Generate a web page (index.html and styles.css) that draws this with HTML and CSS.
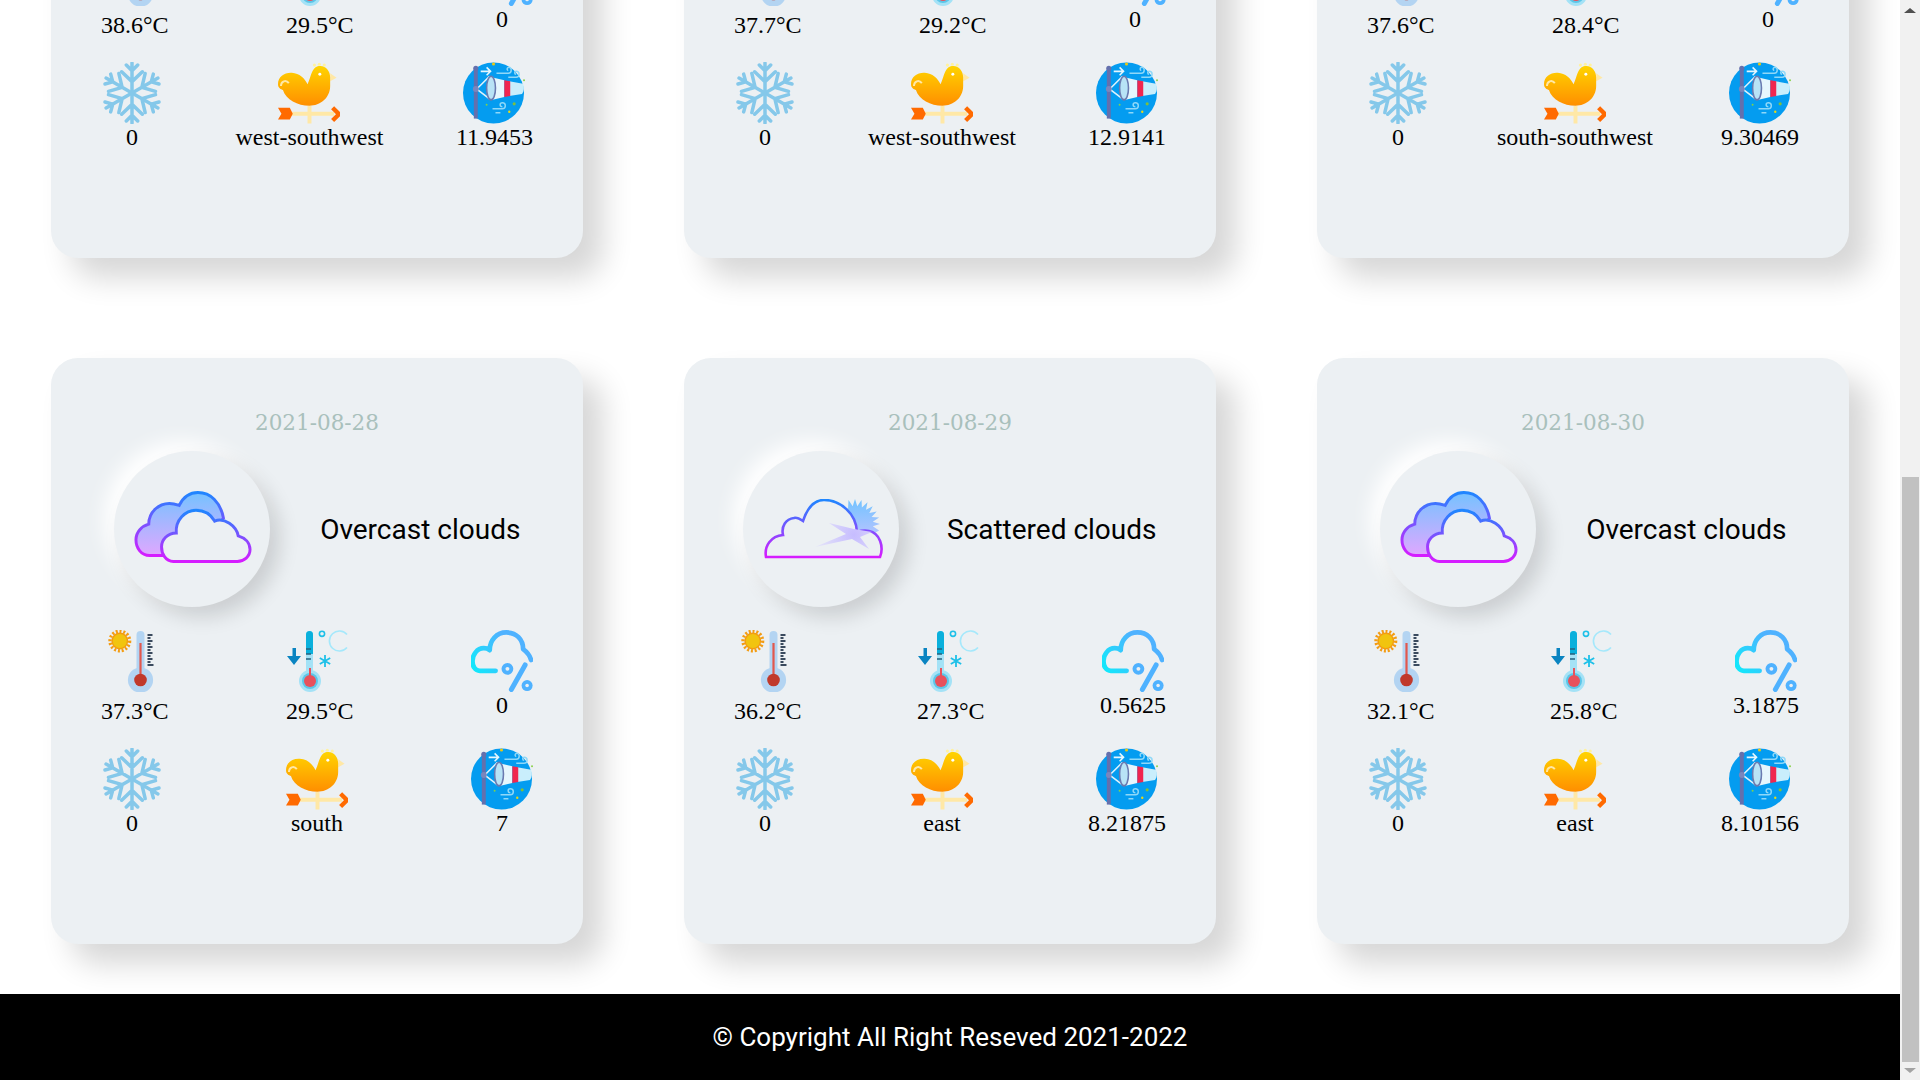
FILE: index.html
```html
<!DOCTYPE html>
<html lang="en">
<head>
    <meta charset="UTF-8">
    <meta name="viewport" content="width=device-width, initial-scale=1.0">
    <title>Weather forecast</title>
    <link rel="stylesheet" href="styles.css">
</head>
<body>
    <!-- icon sprite -->
    <svg class="sprite" xmlns="http://www.w3.org/2000/svg">
        <defs>
            <linearGradient id="lineGrad" x1="0" y1="0" x2="0" y2="1">
                <stop offset="0" stop-color="#1f86ff"/>
                <stop offset="1" stop-color="#d61cff"/>
            </linearGradient>
            <linearGradient id="fillGrad" gradientUnits="userSpaceOnUse" x1="0" y1="0" x2="0" y2="70">
                <stop offset="0" stop-color="#72c3ff"/>
                <stop offset="1" stop-color="#e6a6ff"/>
            </linearGradient>
            <linearGradient id="sunGrad" gradientUnits="userSpaceOnUse" x1="90" y1="0" x2="90" y2="36">
                <stop offset="0" stop-color="#72c3ff"/>
                <stop offset="1" stop-color="#b4c4ff"/>
            </linearGradient>
            <radialGradient id="flareGrad" gradientUnits="userSpaceOnUse" cx="90" cy="36" r="40">
                <stop offset="0" stop-color="#c6bcff"/>
                <stop offset="1" stop-color="#e6e6f8"/>
            </radialGradient>
            <linearGradient id="rainGrad" gradientUnits="userSpaceOnUse" x1="0" y1="36" x2="36" y2="12">
                <stop offset="0" stop-color="#12e8fb"/>
                <stop offset="1" stop-color="#4fb2ff"/>
            </linearGradient>
            <linearGradient id="birdGrad" x1="0" y1="0" x2="0" y2="1">
                <stop offset="0" stop-color="#ffd400"/>
                <stop offset="1" stop-color="#ff8e00"/>
            </linearGradient>
        </defs>

        <symbol id="i-overcast" viewBox="0 0 120 74">
            <path d="M32 66H16C7 66 2 58 2 50C2 42 8 36 15 34C15 22 25 13 36 13C40 13 43 14 46 15C50 7 57 2 65 2C78 2 88 12 91 28L60 66Z" fill="url(#fillGrad)" stroke="url(#lineGrad)" stroke-width="3"/>
            <path d="M40 72C32 72 28 64 28 57C28 50 34 43 43 43C42 30 52 20 63 20C72 20 78 24 82 31C92 27 104 36 106 46C113 48 118 53 118 60C118 67 112 72 105 72Z" fill="#ecf0f3" stroke="url(#lineGrad)" stroke-width="3"/>
        </symbol>

        <symbol id="i-scattered" viewBox="0 0 120 60">
            <polygon fill="url(#sunGrad)" points="84.5,0.9 88.7,7.2 91,0 93.3,7.2 97.5,0.9 97.9,8.4 103.5,3.3 102,10.7 108.7,7.3 105.3,14 112.7,12.5 107.6,18.1 115.1,18.5 108.8,22.7 116,25 108.8,27.3 115.1,31.5 100,40 84,40 84.1,8.4"/>
            <path d="M2 58H116C120 48 116 34 105 32C100 31 96 32 93 33C92 14 76 1 60 1C49 1 43 10 39 22C36 20 33 18 30 19C22 20 17 27 19 36C7 37 0 47 2 58Z" fill="#ecf0f3" stroke="url(#lineGrad)" stroke-width="2.6"/>
            <polygon fill="url(#flareGrad)" points="65,24 90,30 108,33 96,38 105,50 88,40 51,48 82,35"/>
        </symbol>

        <symbol id="i-hot" viewBox="-6.5 0 66 62">
            <circle cx="11.3" cy="11" r="9.8" fill="none" stroke="#f39c12" stroke-width="3.4" stroke-dasharray="2 1.8"/>
            <circle cx="11.3" cy="11" r="8.4" fill="#f39c12"/>
            <circle cx="11.3" cy="11" r="7" fill="#f1c40f"/>
            <rect x="28" y="1" width="8" height="42" rx="4" fill="#b3d4f2"/>
            <circle cx="32" cy="50" r="12.6" fill="#b3d4f2"/>
            <rect x="30.9" y="13" width="2.2" height="32" fill="#e2574c"/>
            <circle cx="32" cy="50" r="6.3" fill="#c0392b"/>
            <path d="M39 5H44M39 8H42M39 11H44M39 14H42M39 17H44M39 20H42M39 23H44M39 26H42M39 29H44M39 32H42M39 35H45" stroke="#3a4a5e" stroke-width="2"/>
        </symbol>

        <symbol id="i-cold" viewBox="0 0 66 62">
            <rect x="19" y="1" width="7" height="42" rx="3.5" fill="#a4e2f6"/>
            <path d="M19 24V4.5a3.5 3.5 0 0 1 7 0V24Z" fill="#0ab0dc"/>
            <circle cx="23" cy="51" r="11" fill="#a4e2f6"/>
            <circle cx="23" cy="51" r="8" fill="#5cc6e8"/>
            <rect x="22" y="38" width="2" height="10" fill="#e8515c"/>
            <circle cx="23" cy="51" r="6" fill="#e8515c"/>
            <path d="M19 19H24M19 24H24M19 29H24" stroke="#27627e" stroke-width="1.4"/>
            <path d="M5.5 18H9V26H14L7 35L0 26H5.5Z" fill="#0a84c1"/>
            <circle cx="35" cy="3.8" r="2.6" fill="none" stroke="#1ec0e8" stroke-width="1.6"/>
            <path d="M60 4.5A10 10 0 1 0 60 17.5" fill="none" stroke="#a5e8fb" stroke-width="1.6"/>
            <path d="M38 25V37M32.8 28L43.2 34M43.2 28L32.8 34" stroke="#1ec0e8" stroke-width="1.8"/>
        </symbol>

        <symbol id="i-rain" viewBox="0 0 63 62">
            <path d="M25 41H9C4 41 1.5 36 1.500 31C1.500 25 6 18 13 18C15 18 17 18.500 19 20C19 10 26 2 36 2C46 2 53 9 53 19C57 22 60 26 61 30" fill="none" stroke="url(#rainGrad)" stroke-width="4.800" stroke-linecap="round" stroke-linejoin="round"/>
            <circle cx="37" cy="39" r="4" fill="none" stroke="#4fb2ff" stroke-width="4"/>
            <path d="M55 35L41 60" stroke="#4fb2ff" stroke-width="5" stroke-linecap="round"/>
            <circle cx="57" cy="56" r="5.600" fill="#4fb2ff"/>
            <circle cx="57" cy="56" r="1.800" fill="#ecf0f3"/>
        </symbol>

        <symbol id="i-snow" viewBox="1 1 60 60">
            <g id="snowArm" fill="none" stroke="#85c8ea" stroke-width="3.400" stroke-linecap="round" stroke-linejoin="round">
                <path d="M31 31V2M25.500 4L31 9.500L36.500 4M21 10.500L31 20L41 10.500"/>
            </g>
            <use href="#snowArm" transform="rotate(60 31 31)"/>
            <use href="#snowArm" transform="rotate(120 31 31)"/>
            <use href="#snowArm" transform="rotate(180 31 31)"/>
            <use href="#snowArm" transform="rotate(240 31 31)"/>
            <use href="#snowArm" transform="rotate(300 31 31)"/>
        </symbol>

        <symbol id="i-vane" viewBox="0 0 63 62">
            <path d="M32 44V62M13 52H57" stroke="#ffe8a6" stroke-width="4"/>
            <circle cx="37" cy="2.600" r="1.600" fill="#fff2a0"/>
            <circle cx="42" cy="1.800" r="1.600" fill="#fff2a0"/>
            <circle cx="47" cy="2.600" r="1.600" fill="#fff2a0"/>
            <path d="M53 11L59.500 15.500L53 19Z" fill="#ffe8a6"/>
            <path d="M0 22C0 14 7 10 14 10.500C22 11 27 16 30 22C32 18 33 13 35 9C37 5 39 3.500 43 3.500C49 3.500 53 9 53 15V24C53 36 43 44 32 44C20 44 8 38 5 28C3 27 0 26 0 22Z" fill="url(#birdGrad)"/>
            <path d="M3 24C3 19 8 17 11 21" fill="none" stroke="#ffe8a6" stroke-width="2"/>
            <circle cx="42.500" cy="12" r="1.500" fill="#fff"/>
            <path d="M0 46H12L15 52L12 58H0L3.500 52Z" fill="#ff6a00"/>
            <path d="M55.500 46L62 52.500L55.500 59" fill="none" stroke="#ff6a00" stroke-width="4.400"/>
        </symbol>

        <symbol id="i-sock" viewBox="0 0 63 62">
            <circle cx="31" cy="31" r="31" fill="#049cf0"/>
            <path d="M47 19L61 21.500C62.500 25 62 29 60 32L47 34Z" fill="#c9eefc"/>
            <path d="M29 15L42 18V35L29 38Z" fill="#e6f6fd"/>
            <path d="M42 18L48 19V34L42 35Z" fill="#f0264f"/>
            <path d="M14 27L27 14M14 27L27 37" stroke="#dff1fb" stroke-width="1.600" fill="none"/>
            <ellipse cx="28.500" cy="26" rx="4.500" ry="12" fill="#b8e3f6" stroke="#6a7ab0" stroke-width="1.600"/>
            <rect x="11" y="6" width="4" height="51" fill="#6470ad"/>
            <circle cx="13" cy="6" r="2.600" fill="#6470ad"/>
            <circle cx="13" cy="27" r="3" fill="#7a86bd"/>
            <path d="M18 9H28M24 5L28 9L24 13" fill="none" stroke="#e6f6fd" stroke-width="1.600"/>
            <path d="M34 11H46C50 11 50 4 46 5C44 6 45 8 46 8M46 15H54C58 15 58 9 54 9C52 9 52 12 54 12" fill="none" stroke="#8fd8f8" stroke-width="1.500"/>
            <path d="M30 47H40C44 47 44 41 40 41C37 41 37 45 40 45M33 51H38" fill="none" stroke="#8fd8f8" stroke-width="1.500"/>
            <circle cx="31" cy="1.500" r="1.600" fill="#e8c715"/>
            <circle cx="62" cy="18" r="1" fill="#8ad14a"/>
            <circle cx="52" cy="42" r="1.600" fill="#7fbf3c"/>
            <circle cx="47" cy="50" r="1.200" fill="#e8d915"/>
            <circle cx="24" cy="43" r="1" fill="#7fd14a"/>
        </symbol>
    </svg>

    <div class="window">
        <div class="viewport">
            <main class="cards">

                <section class="card card-cut">
                    <div class="stats stats-top">
                        <div class="stat"><svg class="icon tall"><use href="#i-hot"/></svg><span>38.6°C</span></div>
                        <div class="stat"><svg class="icon tall"><use href="#i-cold"/></svg><span>29.5°C</span></div>
                        <div class="stat"><svg class="icon"><use href="#i-rain"/></svg><span>0</span></div>
                    </div>
                    <div class="stats">
                        <div class="stat"><svg class="icon"><use href="#i-snow"/></svg><span>0</span></div>
                        <div class="stat"><svg class="icon"><use href="#i-vane"/></svg><span>west-southwest</span></div>
                        <div class="stat"><svg class="icon"><use href="#i-sock"/></svg><span>11.9453</span></div>
                    </div>
                </section>

                <section class="card card-cut">
                    <div class="stats stats-top">
                        <div class="stat"><svg class="icon tall"><use href="#i-hot"/></svg><span>37.7°C</span></div>
                        <div class="stat"><svg class="icon tall"><use href="#i-cold"/></svg><span>29.2°C</span></div>
                        <div class="stat"><svg class="icon"><use href="#i-rain"/></svg><span>0</span></div>
                    </div>
                    <div class="stats">
                        <div class="stat"><svg class="icon"><use href="#i-snow"/></svg><span>0</span></div>
                        <div class="stat"><svg class="icon"><use href="#i-vane"/></svg><span>west-southwest</span></div>
                        <div class="stat"><svg class="icon"><use href="#i-sock"/></svg><span>12.9141</span></div>
                    </div>
                </section>

                <section class="card card-cut">
                    <div class="stats stats-top">
                        <div class="stat"><svg class="icon tall"><use href="#i-hot"/></svg><span>37.6°C</span></div>
                        <div class="stat"><svg class="icon tall"><use href="#i-cold"/></svg><span>28.4°C</span></div>
                        <div class="stat"><svg class="icon"><use href="#i-rain"/></svg><span>0</span></div>
                    </div>
                    <div class="stats">
                        <div class="stat"><svg class="icon"><use href="#i-snow"/></svg><span>0</span></div>
                        <div class="stat"><svg class="icon"><use href="#i-vane"/></svg><span>south-southwest</span></div>
                        <div class="stat"><svg class="icon"><use href="#i-sock"/></svg><span>9.30469</span></div>
                    </div>
                </section>

                <section class="card">
                    <p class="date">2021-08-28</p>
                    <div class="summary">
                        <div class="bubble"><svg class="cloud"><use href="#i-overcast"/></svg></div>
                        <p class="desc">Overcast clouds</p>
                    </div>
                    <div class="stats stats-top">
                        <div class="stat"><svg class="icon tall"><use href="#i-hot"/></svg><span>37.3°C</span></div>
                        <div class="stat"><svg class="icon tall"><use href="#i-cold"/></svg><span>29.5°C</span></div>
                        <div class="stat"><svg class="icon"><use href="#i-rain"/></svg><span>0</span></div>
                    </div>
                    <div class="stats">
                        <div class="stat"><svg class="icon"><use href="#i-snow"/></svg><span>0</span></div>
                        <div class="stat"><svg class="icon"><use href="#i-vane"/></svg><span>south</span></div>
                        <div class="stat"><svg class="icon"><use href="#i-sock"/></svg><span>7</span></div>
                    </div>
                </section>

                <section class="card">
                    <p class="date">2021-08-29</p>
                    <div class="summary">
                        <div class="bubble"><svg class="cloud cloud-sun"><use href="#i-scattered"/></svg></div>
                        <p class="desc">Scattered clouds</p>
                    </div>
                    <div class="stats stats-top">
                        <div class="stat"><svg class="icon tall"><use href="#i-hot"/></svg><span>36.2°C</span></div>
                        <div class="stat"><svg class="icon tall"><use href="#i-cold"/></svg><span>27.3°C</span></div>
                        <div class="stat"><svg class="icon"><use href="#i-rain"/></svg><span>0.5625</span></div>
                    </div>
                    <div class="stats">
                        <div class="stat"><svg class="icon"><use href="#i-snow"/></svg><span>0</span></div>
                        <div class="stat"><svg class="icon"><use href="#i-vane"/></svg><span>east</span></div>
                        <div class="stat"><svg class="icon"><use href="#i-sock"/></svg><span>8.21875</span></div>
                    </div>
                </section>

                <section class="card">
                    <p class="date">2021-08-30</p>
                    <div class="summary">
                        <div class="bubble"><svg class="cloud"><use href="#i-overcast"/></svg></div>
                        <p class="desc">Overcast clouds</p>
                    </div>
                    <div class="stats stats-top">
                        <div class="stat"><svg class="icon tall"><use href="#i-hot"/></svg><span>32.1°C</span></div>
                        <div class="stat"><svg class="icon tall"><use href="#i-cold"/></svg><span>25.8°C</span></div>
                        <div class="stat"><svg class="icon"><use href="#i-rain"/></svg><span>3.1875</span></div>
                    </div>
                    <div class="stats">
                        <div class="stat"><svg class="icon"><use href="#i-snow"/></svg><span>0</span></div>
                        <div class="stat"><svg class="icon"><use href="#i-vane"/></svg><span>east</span></div>
                        <div class="stat"><svg class="icon"><use href="#i-sock"/></svg><span>8.10156</span></div>
                    </div>
                </section>

            </main>
            <footer class="footer">© Copyright All Right Reseved 2021-2022</footer>
        </div>

        <div class="scrollbar">
            <div class="arrow-up"></div>
            <div class="track"><div class="thumb"></div></div>
            <div class="arrow-down"></div>
        </div>
    </div>
</body>
</html>
```

FILE: styles.css
```css
html, body {
    height: 100%;
}
body {
    margin: 0;
    background: #fff;
    color: #000;
    font-family: "Liberation Serif", serif;
    overflow: hidden;
}
.sprite {
    position: absolute;
    width: 0;
    height: 0;
}
.window {
    display: flex;
    height: 100vh;
}

/* the page is shown scrolled to its end, so the content hangs from the bottom */
.viewport {
    flex: 1;
    min-width: 0;
    display: flex;
    flex-direction: column;
    justify-content: flex-end;
    overflow: hidden;
}
.cards {
    flex: none;
    display: grid;
    grid-template-columns: repeat(3, 532px);
    justify-content: space-between;
    row-gap: 100px;
    padding: 0 51px 50px;
}
.card {
    height: 586px;
    box-sizing: border-box;
    padding-top: 51px;
    background: #ecf0f3;
    border-radius: 27px;
    box-shadow: 20px 20px 30px rgba(0, 0, 0, 0.16);
}
/* top row: date and summary are above the fold */
.card-cut {
    padding-top: 249px;
}
.date {
    margin: 0 0 14px;
    text-align: center;
    font-family: "DejaVu Serif", serif;
    font-size: 21.5px;
    line-height: 28px;
    color: #a9c0bc;
}
.summary {
    display: flex;
    justify-content: space-evenly;
    align-items: center;
    padding: 0 12px;
}
.bubble {
    flex: none;
    width: 156px;
    height: 156px;
    display: flex;
    justify-content: center;
    align-items: center;
    border-radius: 50%;
    background: #ecf0f3;
    box-shadow: 10px 10px 20px rgba(0, 0, 0, 0.14), -10px -10px 20px #fff;
}
.cloud {
    width: 118px;
    height: 74px;
    margin: -4px 0 0 2px;
}
.cloud-sun {
    width: 120px;
    height: 60px;
    margin: 0 0 0 6px;
}
.desc {
    margin: 0;
    font-family: Roboto, sans-serif;
    font-size: 28px;
    white-space: nowrap;
}
.stats {
    display: flex;
    justify-content: space-between;
    padding: 0 50px;
}
.stats-top {
    margin: 23px 0 23px;
}
.stat {
    display: flex;
    flex-direction: column;
    align-items: center;
    font-size: 24px;
    line-height: 27px;
}
.icon {
    width: 62px;
    height: 62px;
}
.icon.tall {
    width: 66px;
    margin-bottom: 6px;
}
.footer {
    flex: none;
    height: 86px;
    display: flex;
    justify-content: center;
    align-items: center;
    background: #000;
    color: #fff;
    font-family: Roboto, sans-serif;
    font-size: 26px;
}

/* scrollbar */
.scrollbar {
    flex: none;
    width: 20px;
    display: flex;
    flex-direction: column;
    align-items: center;
    background: #f1f1f1;
}
.arrow-up, .arrow-down {
    flex: none;
    width: 0;
    height: 0;
    border-left: 6px solid transparent;
    border-right: 6px solid transparent;
}
.arrow-up {
    margin: 8px 0 6px;
    border-bottom: 5px solid #505050;
}
.arrow-down {
    margin: 6px 0 7px;
    border-top: 5px solid #a3a3a3;
}
.track {
    flex: 1;
    width: 100%;
    display: flex;
    flex-direction: column;
    justify-content: flex-end;
    align-items: center;
}
.thumb {
    width: 17px;
    height: 585px;
    background: #c1c1c1;
}
```
